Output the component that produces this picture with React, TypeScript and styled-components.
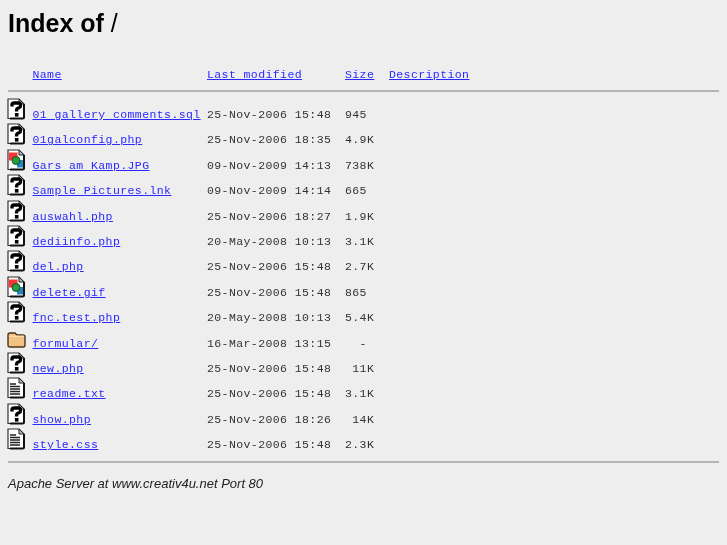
import styled, { createGlobalStyle } from "styled-components";

const GlobalStyle = createGlobalStyle`
html, body {
  margin: 0;
  background: #eeeeee;
}
`;

const Page = styled.div`
  padding: 7px 0 0 8px;
  width: 711px;
  height: 538px;
  overflow: hidden;
  color: #333;
  filter: blur(0.3px);
`;

const Title = styled.h1`
  margin: 0;
  height: 32px;
  font: bold 25px/32px "Liberation Sans", Arial, sans-serif;
  color: #000;
`;

const Slash = styled.span`
  font-weight: normal;
`;

const Header = styled.div`
  display: grid;
  grid-template-columns: 24.5px 174.5px 138px 44px 1fr;
  margin-top: 29px;
  height: 14px;
  align-items: center;
`;

const Row = styled.div`
  display: grid;
  grid-template-columns: 24.5px 174.5px 138px 44px 1fr;
  height: 25.4px;
  align-items: start;
`;

const Rule = styled.hr<{ $before: number; $after: number }>`
  width: 712px;
  margin: ${(p) => p.$before}px 0 ${(p) => p.$after}px -0.5px;
  border: 0;
  height: 2px;
  background: #b4b4b4;
`;

const Rows = styled.div`
  margin-top: 6px;
`;

const Mono = styled.span`
  font: 11.5px/14px "Liberation Mono", "Courier New", monospace;
  letter-spacing: 0.41px;
  white-space: pre;
`;

const Link = styled(Mono).attrs({ as: "a", href: "#" })`
  color: #2a2aff;
  text-decoration: underline;
`;

const Cell = styled(Mono)`
  padding-top: 10px;
`;

const NameCell = styled(Cell)`
  display: block;
`;

const IconSvg = styled.svg`
  margin-left: -1px;
`;

const Footer = styled.address`
  font: italic 13px/16px "Liberation Sans", Arial, sans-serif;
  color: #222;
`;

type Kind = "unknown" | "image" | "text" | "folder";

function FileIcon({ kind }: { kind: Kind }) {
  if (kind === "folder") {
    return (
      <IconSvg width="20" height="22" viewBox="0 0 20 22">
        <path d="M1 8Q1 6 3 6H8L10 8H16Q18 8 18 10V18Q18 20 16 20H3Q1 20 1 18Z" fill="#f5c183" stroke="#4a3418" strokeWidth="1.4" />
        <path d="M2 9.2H17" stroke="#ffe3bb" strokeWidth="1.2" />
      </IconSvg>
    );
  }
  return (
    <IconSvg width="20" height="22" viewBox="0 0 20 22">
      <path d="M1 1H12L17 6V19Q17 20.5 15.5 20.5H1Z" fill="#fff" stroke="#333" strokeWidth="1.2" />
      <path d="M17 6V19Q17 20.5 15.5 20.5H3" fill="none" stroke="#111" strokeWidth="2" />
      <path d="M12 1V6H17Z" fill="#bbb" stroke="#222" strokeWidth="1" />
      {kind === "unknown" && (
        <>
          <path d="M5 8.5V6.5Q5 5 7 5H11.5Q13.5 5 13.5 7V8Q13.5 9.3 12 9.8L10.2 10.6Q9.6 11 9.6 12V13.5" fill="none" stroke="#000" strokeWidth="3.3" />
          <rect x="7.9" y="15" width="3.6" height="3.6" fill="#000" />
        </>
      )}
      {kind === "image" && (
        <>
          <rect x="2" y="3.5" width="8.5" height="8" fill="#f33" />
          <rect x="10" y="11" width="6" height="7.5" fill="#1f86c0" />
          <circle cx="9" cy="11.5" r="4" fill="#27a03c" stroke="#143" strokeWidth="0.9" />
        </>
      )}
      {kind === "text" && (
        <path d="M3 7H9M3 9.5H13M3 12H13M3 14.5H13M3 17H13" stroke="#222" strokeWidth="1.6" />
      )}
    </IconSvg>
  );
}

const files: { name: string; date: string; size: string; kind: Kind }[] = [
  { name: "01 gallery comments.sql", date: "25-Nov-2006 15:48", size: "945", kind: "unknown" },
  { name: "01galconfig.php", date: "25-Nov-2006 18:35", size: "4.9K", kind: "unknown" },
  { name: "Gars am Kamp.JPG", date: "09-Nov-2009 14:13", size: "738K", kind: "image" },
  { name: "Sample Pictures.lnk", date: "09-Nov-2009 14:14", size: "665", kind: "unknown" },
  { name: "auswahl.php", date: "25-Nov-2006 18:27", size: "1.9K", kind: "unknown" },
  { name: "dediinfo.php", date: "20-May-2008 10:13", size: "3.1K", kind: "unknown" },
  { name: "del.php", date: "25-Nov-2006 15:48", size: "2.7K", kind: "unknown" },
  { name: "delete.gif", date: "25-Nov-2006 15:48", size: "865", kind: "image" },
  { name: "fnc.test.php", date: "20-May-2008 10:13", size: "5.4K", kind: "unknown" },
  { name: "formular/", date: "16-Mar-2008 13:15", size: "  -", kind: "folder" },
  { name: "new.php", date: "25-Nov-2006 15:48", size: " 11K", kind: "unknown" },
  { name: "readme.txt", date: "25-Nov-2006 15:48", size: "3.1K", kind: "text" },
  { name: "show.php", date: "25-Nov-2006 18:26", size: " 14K", kind: "unknown" },
  { name: "style.css", date: "25-Nov-2006 15:48", size: "2.3K", kind: "text" },
];

export default function App() {
  return (
    <Page>
      <GlobalStyle />
      <Title>
        Index of <Slash>/</Slash>
      </Title>
      <Header>
        <span />
        <Mono><Link>Name</Link></Mono>
        <Mono><Link>Last modified</Link></Mono>
        <Mono><Link>Size</Link></Mono>
        <Mono><Link>Description</Link></Mono>
      </Header>
      <Rule $before={8} $after={0} />
      <Rows>
        {files.map((f) => (
          <Row key={f.name}>
            <FileIcon kind={f.kind} />
            <NameCell><Link>{f.name}</Link></NameCell>
            <Cell>{f.date}</Cell>
            <Cell>{f.size}</Cell>
            <span />
          </Row>
        ))}
      </Rows>
      <Rule $before={8} $after={13} />
      <Footer>Apache Server at www.creativ4u.net Port 80</Footer>
    </Page>
  );
}
